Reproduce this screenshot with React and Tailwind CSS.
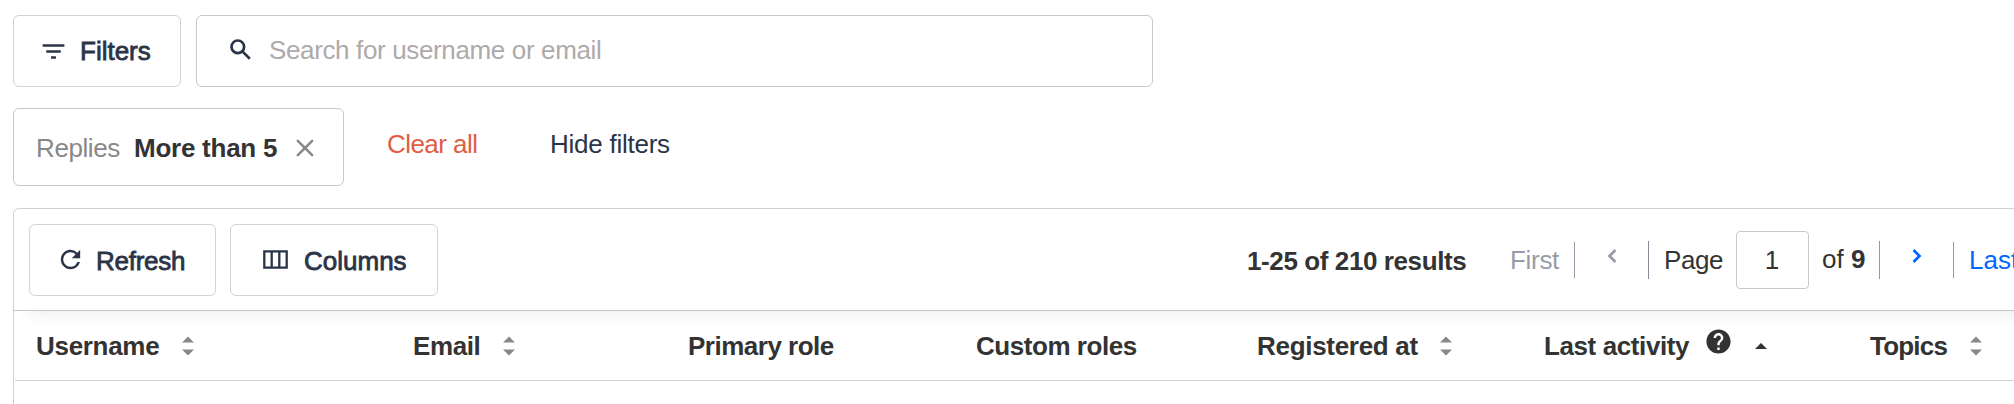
import React, { useState } from 'react';
import { MdFilterList, MdRefresh, MdHelp } from 'react-icons/md';

const columns = [
  { label: 'Username', width: 'w-[377px]', text: 'w-[146px] tracking-[-0.3px]', sort: 'both' },
  { label: 'Email', width: 'w-[275px]', text: 'w-[90px] tracking-[-0.4px]', sort: 'both' },
  { label: 'Primary role', width: 'w-[288px]', text: 'tracking-[-0.5px]' },
  { label: 'Custom roles', width: 'w-[281px]', text: 'tracking-[-0.45px]' },
  { label: 'Registered at', width: 'w-[287px]', text: 'w-[183px] tracking-[-0.3px]', sort: 'both' },
  { label: 'Last activity', width: 'w-[326px]', text: 'w-[160px] tracking-[-0.4px]', sort: 'up', help: true },
  { label: 'Topics', width: 'w-[200px]', text: 'w-[100px] tracking-[-0.8px]', sort: 'both' },
];

const SearchIcon = () => (
  <svg className="w-[21px] h-[21px] -mt-[2px] ml-1 mr-[18px] text-[#2b3347]" viewBox="0 0 21 21" fill="none" stroke="currentColor" strokeWidth="2.7">
    <circle cx="7.8" cy="7.8" r="6.3" />
    <path d="M12.4 12.4L19.8 19.8" />
  </svg>
);

const ColumnsIcon = () => (
  <svg className="w-[25px] h-[19px]" viewBox="0 0 25 19" fill="none" stroke="currentColor" strokeWidth="2.3">
    <path d="M1.3 1.3H23.7V17.7H1.3ZM8.7 1.2V17.8M16.3 1.2V17.8" />
  </svg>
);

const CloseIcon = () => (
  <svg className="w-[18px] h-[18px]" viewBox="0 0 18 18" fill="none" stroke="currentColor" strokeWidth="2.5" strokeLinecap="round">
    <path d="M1.8 1.8L16.2 16.2M16.2 1.8L1.8 16.2" />
  </svg>
);

const Chevron = ({ d, className }) => (
  <svg className={`w-[10px] h-[14px] ${className}`} viewBox="0 0 10 14" fill="none" stroke="currentColor" strokeWidth="2.7">
    <path d={d} />
  </svg>
);

const SortIcon = ({ direction }) => {
  if (direction === 'up') {
    return (
      <svg className="w-3 h-[6px] text-[#333]" viewBox="0 0 12 6" fill="currentColor">
        <path d="M0 6L6 0L12 6Z" />
      </svg>
    );
  }
  return (
    <svg className="w-3 h-[20px] text-[#888]" viewBox="0 0 12 20" fill="currentColor">
      <path d="M0 6.5L6 0.5L12 6.5ZM0 13.5L6 19.5L12 13.5Z" />
    </svg>
  );
};

const Button = ({ className, children }) => (
  <button
    className={`h-[72px] flex items-center shrink-0 border border-[#d3d3d3] rounded-md bg-white text-[#2b3347] [-webkit-text-stroke:0.8px] ${className}`}
  >
    {children}
  </button>
);

const HeaderCell = ({ column }) => (
  <div className={`flex items-center shrink-0 ${column.width}`}>
    <span className={`font-bold ${column.text}`}>{column.label}</span>
    {column.help && <MdHelp className="w-[29px] h-[29px] -mt-[9px] mr-[22px]" />}
    {column.sort && <SortIcon direction={column.sort} />}
  </div>
);

const App = () => {
  const [search, setSearch] = useState('');
  const [page, setPage] = useState('1');

  return (
    <div className="w-full h-[404px] overflow-hidden bg-white pt-[15px] pl-[13px] font-['Liberation_Sans',Arial,sans-serif] text-[26px] leading-[30px] text-[#333] whitespace-nowrap">
      {/* Search bar */}
      <div className="flex gap-[15px]">
        <Button className="w-[168px] pl-[25px]">
          <MdFilterList className="w-[29px] h-[29px] mr-[12px] stroke-0" />
          <span>Filters</span>
        </Button>
        <div className="w-[957px] h-[72px] flex items-center border border-[#c8c8c8] rounded-md pl-[29px] pb-[2px]">
          <SearchIcon />
          <input
            type="text"
            placeholder="Search for username or email"
            className="flex-1 outline-none tracking-[-0.36px] placeholder-[#aeaaaa]"
            value={search}
            onChange={(e) => setSearch(e.target.value)}
          />
        </div>
      </div>

      {/* Active filters */}
      <div className="flex mt-[21px]">
        <div className="w-[331px] h-[78px] flex items-center border border-[#c8c8c8] rounded-md pl-[22px] pt-px">
          <span className="w-[98px] text-[#888] tracking-[-0.4px]">Replies</span>
          <span className="w-[162px] font-bold tracking-[-0.25px]">More than 5</span>
          <button className="text-[#888]"><CloseIcon /></button>
        </div>
        <button className="ml-[43px] w-[163px] h-[72px] text-left text-[#e05d44] tracking-[-0.55px]">Clear all</button>
        <button className="h-[72px] text-[#2b3347] tracking-[-0.25px]">Hide filters</button>
      </div>

      {/* Users table */}
      <div className="w-[2100px] h-[220px] mt-[22px] border border-[#d0d0d4] rounded-tl-md overflow-hidden">
        <div className="h-[102px] flex items-center pl-[15px] pt-px border-b border-[#c8c8c8] shadow-[0_16px_16px_-14px_rgba(0,0,0,0.08)]">
          <Button className="w-[187px] pl-[26px]">
            <MdRefresh className="w-[29px] h-[29px] -mt-[1px] mr-[11px] stroke-0" />
            <span className="pt-px tracking-[-0.25px]">Refresh</span>
          </Button>
          <Button className="w-[208px] ml-[14px] pl-[32px]">
            <span className="mr-[16px] -mt-[2px]"><ColumnsIcon /></span>
            <span className="pt-px">Columns</span>
          </Button>
          <span className="w-[263px] ml-[809px] pt-[2px] font-bold tracking-[-0.4px]">1-25 of 210 results</span>
          <button className="w-[65px] h-9 text-left text-[#989ca8] tracking-[-0.3px] border-r border-[#989ca8]">First</button>
          <button className="w-[74px] h-[38px] flex justify-center text-[#989ca8] border-r border-[#888c98]">
            <Chevron d="M8.5 1L2.5 7L8.5 13" className="mt-2" />
          </button>
          <span className="w-[87px] pl-[15px] tracking-[-0.4px]">Page</span>
          <input
            className="w-[73px] h-[58px] pr-px text-center border border-[#c8c8c8] rounded outline-none"
            value={page}
            onChange={(e) => setPage(e.target.value)}
          />
          <span className="w-[71px] h-[38px] pl-[13px] pt-[3px] border-r border-[#989898]">of <b>9</b></span>
          <button className="w-[74px] h-9 flex justify-center text-[#0066ff] border-r border-[#989898]">
            <Chevron d="M1.5 1L7.5 7L1.5 13" className="mt-[7px] ml-px" />
          </button>
          <button className="pl-[15px] text-[#0066ff]">Last</button>
        </div>
        <div className="h-[70px] ml-px pl-[21px] flex items-center border-b border-[#d0d0d4]">
          {columns.map((column) => (
            <HeaderCell key={column.label} column={column} />
          ))}
        </div>
      </div>
    </div>
  );
};

export default App;
